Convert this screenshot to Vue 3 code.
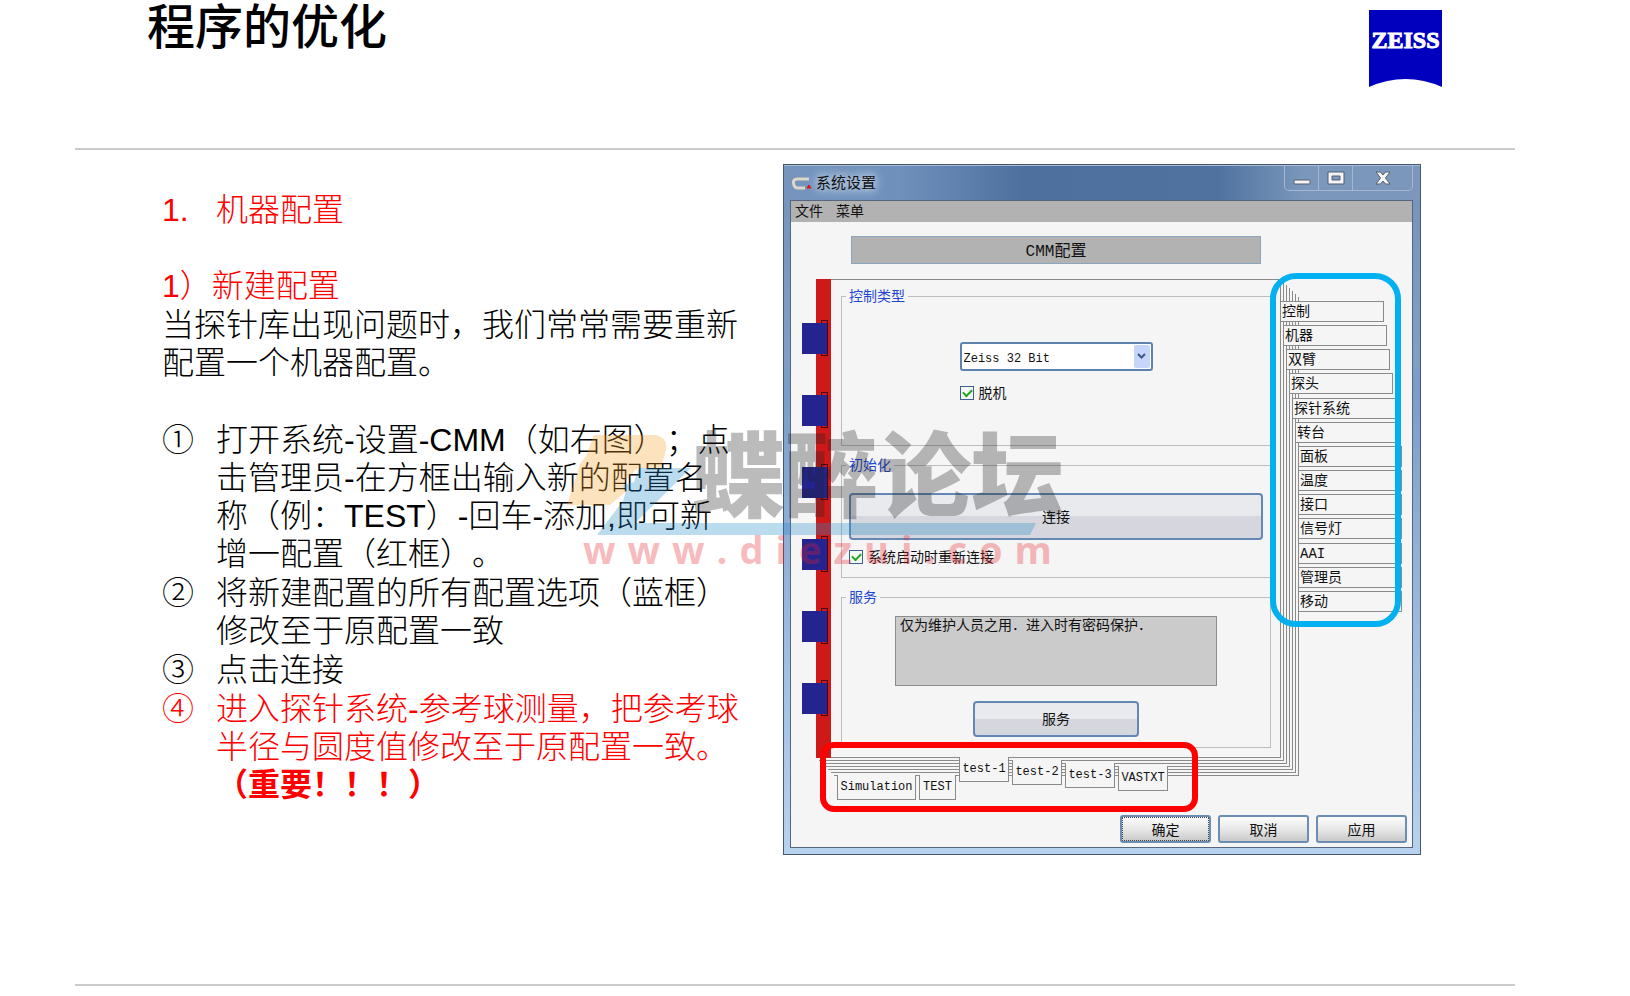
<template>
  <div class="slide">
    <header class="slide-header">
      <h1>程序的优化</h1>
      <svg class="logo" viewBox="0 0 73 78" role="img" aria-label="ZEISS">
        <path d="M0 0H73V77Q36.500 61 0 77Z" fill="#0000be" />
        <text x="36.500" y="38" text-anchor="middle" class="logo-text">ZEISS</text>
      </svg>
    </header>

    <main class="slide-body">
      <section class="article">
        <h2><span class="number">1.</span>机器配置</h2>
        <h3>1）新建配置</h3>
        <p>当探针库出现问题时，我们常常需要重新<br />配置一个机器配置。</p>
        <ul class="steps">
          <li v-for="step in steps" :key="step.mark" :class="{ red: step.red }">
            <span class="mark">{{ step.mark }}</span>
            <div>
              <div v-for="line in step.lines" :key="line">{{ line }}</div>
              <strong v-if="step.strong">{{ step.strong }}</strong>
            </div>
          </li>
        </ul>
      </section>

      <section class="window">
        <div class="title-bar">
          <svg class="app-icon" width="22" height="16" viewBox="0 0 22 16">
            <path
              d="M18 3H6Q2 3 2.500 7Q3 12 7 12H14"
              fill="none"
              stroke="#8a8a88"
              stroke-width="4"
            />
            <path
              d="M18 3H6Q2 3 2.500 7Q3 12 7 12H14"
              fill="none"
              stroke="#d8d8d4"
              stroke-width="3"
            />
            <path d="M18 9L20 12H16Z" fill="#e01010" stroke="#e01010" />
          </svg>
          <span class="window-title">系统设置</span>
          <div class="window-buttons">
            <button type="button" aria-label="最小化">
              <svg width="18" height="14" viewBox="0 0 18 14">
                <rect x="1" y="9" width="16" height="4" rx="1" fill="#f4f4f4" stroke="#555f70" />
              </svg>
            </button>
            <button type="button" aria-label="最大化">
              <svg width="18" height="14" viewBox="0 0 18 14">
                <path
                  d="M1 1H17V13H1ZM5 5V9H13V5Z"
                  fill="#f4f4f4"
                  fill-rule="evenodd"
                  stroke="#555f70"
                />
              </svg>
            </button>
            <button type="button" class="close" aria-label="关闭">
              <svg width="16" height="14" viewBox="0 0 16 14">
                <path
                  d="M1 1H5.500L8 4L10.500 1H15L10.500 7L15 13H10.500L8 10L5.500 13H1L5.500 7Z"
                  fill="#f4f4f4"
                  stroke="#555f70"
                />
              </svg>
            </button>
          </div>
        </div>

        <div class="window-content">
          <nav class="menu-bar">
            <a href="#">文件</a>
            <a href="#">菜单</a>
          </nav>

          <div class="config-title">CMM配置</div>

          <div class="binder">
            <div class="spine">
              <svg v-for="n in 6" :key="n" width="27" height="36" viewBox="0 0 27 36">
                <rect x="0" y="3" width="25" height="31" fill="#242490" />
                <rect x="19.500" y="0.500" width="6" height="35" fill="none" stroke="#4a0610" />
                <rect x="18" y="3" width="7" height="31" fill="#242490" />
              </svg>
            </div>

            <div class="sheet">
              <fieldset>
                <legend>控制类型</legend>
                <div class="control-type">
                  <div class="select-box">
                    <select v-model="control" aria-label="控制类型">
                      <option>Zeiss 32 Bit</option>
                    </select>
                    <span class="arrow">
                      <svg width="9" height="7" viewBox="0 0 9 7">
                        <path
                          d="M1 1L4.500 4.500L8 1"
                          fill="none"
                          stroke="#3c5a84"
                          stroke-width="2"
                        />
                      </svg>
                    </span>
                  </div>
                  <label class="check">
                    <input v-model="offline" type="checkbox" /><span>脱机</span>
                  </label>
                </div>
              </fieldset>

              <fieldset class="init">
                <legend>初始化</legend>
                <button type="button" class="push connect">连接</button>
                <label class="check">
                  <input v-model="reconnect" type="checkbox" /><span>系统启动时重新连接</span>
                </label>
              </fieldset>

              <fieldset class="service">
                <legend>服务</legend>
                <textarea v-model="note" aria-label="服务说明" readonly></textarea>
                <button type="button" class="push">服务</button>
              </fieldset>
            </div>

            <div class="side">
              <button
                v-for="(tab, i) in sideTabs"
                :key="tab"
                type="button"
                :class="'level-' + Math.min(i, 6)"
              >
                {{ tab }}
              </button>
              <div class="frame blue"></div>
            </div>
          </div>

          <div class="bottom">
            <button
              v-for="tab in bottomTabs"
              :key="tab.name"
              type="button"
              :class="tab.size"
            >
              {{ tab.name }}
            </button>
            <div class="frame red-frame"></div>
          </div>

          <div class="actions">
            <button type="button" class="focused">确定</button>
            <button type="button">取消</button>
            <button type="button">应用</button>
          </div>
        </div>
      </section>
    </main>

    <div class="slide-footer"></div>

    <div class="watermark">
      <svg width="480" height="112" viewBox="0 0 480 112">
        <path
          d="M34 10H95Q108 12 106 25L101 43H78L63 57L69 64L50 80H7L20 39L26 31Z"
          fill="#fba428"
        />
        <path
          d="M79 43H131L75 98H476L470 110H37L63 76L66 66L62 61L74 57Z"
          fill="#2389c9"
        />
      </svg>
      <div class="watermark-name">蝶醉论坛</div>
      <div class="watermark-url">www.diezui.com</div>
    </div>
  </div>
</template>

<script setup>
import { ref } from "vue";

const control = ref("Zeiss 32 Bit");
const offline = ref(true);
const reconnect = ref(true);
const note = ref("仅为维护人员之用．进入时有密码保护．");

const steps = [
  {
    mark: "①",
    lines: [
      "打开系统-设置-CMM（如右图）；点",
      "击管理员-在方框出输入新的配置名",
      "称（例：TEST）-回车-添加,即可新",
      "增一配置（红框）。",
    ],
  },
  {
    mark: "②",
    lines: ["将新建配置的所有配置选项（蓝框）", "修改至于原配置一致"],
  },
  { mark: "③", lines: ["点击连接"] },
  {
    mark: "④",
    lines: ["进入探针系统-参考球测量，把参考球", "半径与圆度值修改至于原配置一致。"],
    strong: "（重要！！！）",
    red: true,
  },
];

const sideTabs = [
  "控制",
  "机器",
  "双臂",
  "探头",
  "探针系统",
  "转台",
  "面板",
  "温度",
  "接口",
  "信号灯",
  "AAI",
  "管理员",
  "移动",
];

const bottomTabs = [
  { name: "Simulation", size: "wide" },
  { name: "TEST", size: "small" },
  { name: "test-1", size: "step-0" },
  { name: "test-2", size: "step-1" },
  { name: "test-3", size: "step-2" },
  { name: "VASTXT", size: "step-3" },
];
</script>

<style>
body {
  margin: 0;
  background: #fff;
}
</style>

<style scoped>
.slide {
  position: relative;
  box-sizing: border-box;
  min-height: 100vh;
  padding: 0 115px 10px 75px;
  display: flex;
  flex-direction: column;
  background: #fff;
  color: #000;
  font-family: "Liberation Sans", "Noto Sans CJK SC", sans-serif;
  text-spacing-trim: space-all;
}

button,
select,
textarea,
input {
  box-sizing: border-box;
  margin: 0;
  padding: 0;
  color: inherit;
  font: inherit;
}

.slide-header {
  box-sizing: border-box;
  height: 150px;
  padding: 0 73px 0 72px;
  display: flex;
  justify-content: space-between;
  border-bottom: 2px solid #cbcbcb;
}

h1 {
  margin: 0;
  font-size: 48px;
  line-height: 56px;
  font-weight: 500;
}

.logo {
  width: 73px;
  height: 78px;
  margin-top: 10px;
}

.logo-text {
  fill: #fff;
  stroke: #fff;
  stroke-width: 1px;
  font-family: "Liberation Serif", serif;
  font-size: 24px;
  font-weight: 700;
}

.slide-body {
  flex: 1;
  display: grid;
  grid-template-columns: minmax(0, 621fr) minmax(0, 638fr);
  align-items: start;
  padding: 14px 94px 0 87px;
}

/* left text */
.article {
  padding-top: 27px;
  font-size: 32px;
  line-height: 38px;
  font-weight: 300;
  white-space: nowrap;
}

h2,
h3,
.article p {
  margin: 0;
  font-size: 32px;
  font-weight: 300;
}

h2,
h3 {
  color: #f00;
}

h2 {
  display: flex;
  margin-bottom: 38px;
}

h3 {
  margin-bottom: 1px;
}

.number {
  width: 54px;
}

.article p {
  margin-bottom: 39px;
}

.steps {
  display: flex;
  flex-direction: column;
  gap: 1px;
  margin: 0;
  padding: 0;
  list-style: none;
}

.steps li {
  display: flex;
}

.steps .red {
  color: #f00;
}

.mark {
  width: 54px;
}

strong {
  font-weight: 700;
}

/* dialog window */
.window {
  box-sizing: border-box;
  padding: 0 7px 6px 6px;
  border: 1px solid #45566e;
  background: linear-gradient(#7593b9 0, #7f9fc8 28%, #7a9cc8 32%, #a3c1e3 75%, #b7d2ee 100%);
  color: #111;
  font-family: "Liberation Mono", "Noto Sans CJK SC", monospace;
  font-size: 14px;
  line-height: 16px;
}

.title-bar {
  height: 35px;
  margin: 0 -7px 0 -6px;
  padding-left: 7px;
  display: flex;
  align-items: flex-start;
  border-top: 1px solid #a9bdd6;
  box-sizing: border-box;
  background: linear-gradient(90deg, #7595bf, #6f90bb 18%, #4e709e 38%, #50729f 68%, #7b98bc 82%, #7b98bc);
}

.app-icon {
  margin-top: 10px;
}

.window-title {
  margin: 11px 0 0 3px;
  font-size: 15px;
  text-shadow: 0 0 8px #dbe6f4, 0 0 12px #dbe6f4;
}

.window-buttons {
  display: flex;
  margin: 0 7px 0 auto;
  border: 1px solid #a3b7d0;
  border-top: none;
  border-radius: 0 0 5px 5px;
}

.window-buttons button {
  width: 34px;
  height: 24px;
  display: flex;
  align-items: center;
  justify-content: center;
  border: none;
  border-right: 1px solid #a3b7d0;
  background: none;
}

.window-buttons .close {
  width: 59px;
  border-right: none;
}

.window-content {
  border: 1px solid #56677d;
  background: #f5f5f5;
}

.menu-bar {
  height: 21px;
  padding-left: 4px;
  display: flex;
  align-items: center;
  gap: 13px;
  background: #b2b2b2;
}

.menu-bar a {
  color: inherit;
  text-decoration: none;
}

.config-title {
  margin: 14px 151px 0 60px;
  padding-top: 4px;
  border: 1px solid #8aa5bf;
  background: #b2b2b2;
  font-size: 16px;
  line-height: 22px;
  text-align: center;
}

/* ring binder with stacked pages */
.binder {
  display: flex;
  margin: 15px 0 0 25px;
}

.spine {
  position: relative;
  z-index: 1;
  width: 15px;
  padding-top: 41px;
  display: flex;
  flex-direction: column;
  gap: 36px;
  box-sizing: border-box;
  background: #cf1919;
}

.spine svg {
  margin-left: -14px;
  overflow: visible;
}

.sheet {
  flex: 1;
  min-width: 0;
  margin-left: -15px;
  padding: 7px 9px 9px 25px;
  display: flex;
  flex-direction: column;
  gap: 10px;
  border: 1px solid #8a8a8a;
  border-left: none;
  background: #f5f5f5;
  box-shadow:
    2px 2px 0 #f5f5f5,
    3px 3px 0 #8a8a8a,
    5px 5px 0 #f5f5f5,
    6px 6px 0 #8a8a8a,
    8px 8px 0 #f5f5f5,
    9px 9px 0 #8a8a8a,
    11px 11px 0 #f5f5f5,
    12px 12px 0 #8a8a8a,
    14px 14px 0 #f5f5f5,
    15px 15px 0 #8a8a8a,
    17px 17px 0 #f5f5f5,
    18px 18px 0 #8a8a8a;
}

fieldset {
  box-sizing: border-box;
  min-width: 0;
  height: 159px;
  margin: 0;
  padding: 0 7px;
  border: 1px solid #bdbdbd;
}

fieldset.init {
  height: 122px;
}

fieldset.service {
  height: 160px;
}

legend {
  margin-left: -3px;
  padding: 2px 3px 0;
  color: #1f48d0;
}

.control-type {
  width: 193px;
  margin: 37px auto 0;
}

.select-box {
  position: relative;
  height: 29px;
  margin-bottom: 13px;
}

select {
  width: 100%;
  height: 100%;
  padding: 4px 0 0 2px;
  appearance: none;
  border: 2px solid #5d83ad;
  border-radius: 3px;
  background: #fff;
  font-size: 12px;
}

.arrow {
  position: absolute;
  top: 3px;
  right: 3px;
  width: 16px;
  height: 23px;
  display: flex;
  align-items: center;
  justify-content: center;
  border-radius: 2px;
  background: #c6d6fb;
  pointer-events: none;
}

.check {
  display: flex;
  align-items: center;
  gap: 5px;
}

.check span {
  padding-top: 2px;
}

.check input {
  width: 14px;
  height: 14px;
  appearance: none;
  border: 1px solid #3c6090;
  background: #f2f7f2;
}

.check input:checked::before {
  content: "";
  display: block;
  width: 7px;
  height: 4px;
  margin: 2px 0 0 2px;
  border: solid #1fa51f;
  border-width: 0 0 2px 2px;
  transform: rotate(-45deg);
}

.push {
  display: block;
  width: 166px;
  height: 36px;
  margin: 0 auto;
  padding-top: 2px;
  border: 2px solid #6488b4;
  border-radius: 4px;
  background: linear-gradient(#e9eaee 50%, #d6d7de 50%);
}

.push.connect {
  width: 100%;
  height: 47px;
  margin: 19px 0 8px;
}

textarea {
  display: block;
  width: 322px;
  height: 70px;
  margin: 10px auto 15px;
  padding: 1px 4px 0;
  resize: none;
  border: 1px solid #8c8c8c;
  background: #cbcbcb;
  font-size: 14px;
}

/* side tabs */
.side {
  position: relative;
  z-index: 1;
  width: 131px;
  height: 311px;
  margin-top: 22px;
  display: flex;
  flex-direction: column;
  justify-content: space-between;
}

.side button {
  width: 103px;
  height: 21px;
  padding: 1px 0 0 1px;
  border: 1px solid #8a8a8a;
  border-left: none;
  background: #f5f5f5;
  text-align: left;
  line-height: 18px;
}

.level-1 {
  margin-left: 3px;
}

.level-2 {
  margin-left: 6px;
}

.level-3 {
  margin-left: 9px;
}

.level-4 {
  margin-left: 12px;
}

.level-5 {
  margin-left: 15px;
}

.level-6 {
  margin-left: 18px;
}

.frame {
  position: absolute;
  box-sizing: border-box;
  pointer-events: none;
}

.frame.blue {
  top: -28px;
  left: -11px;
  width: 131px;
  height: 354px;
  border: 6px solid #00b0f0;
  border-radius: 26px;
}

/* configuration tabs */
.bottom {
  position: relative;
  z-index: 1;
  display: flex;
  align-items: flex-start;
  gap: 3px;
  height: 58px;
  margin: -1px 0 0 46px;
}

.bottom button {
  flex: none;
  width: 50px;
  height: 25px;
  border: 1px solid #8a8a8a;
  border-top: none;
  background: #f5f5f5;
  font-size: 12px;
  line-height: 16px;
  white-space: nowrap;
}

.bottom .wide {
  width: 79px;
  margin-top: 18px;
}

.bottom .small {
  width: 37px;
  margin-top: 18px;
}

.bottom .step-1 {
  margin-top: 3px;
}

.bottom .step-2 {
  margin-top: 6px;
}

.bottom .step-3 {
  margin-top: 9px;
}

.red-frame {
  top: -15px;
  left: -17px;
  width: 378px;
  height: 70px;
  border: 6px solid #f00;
  border-radius: 14px;
}

.actions {
  display: flex;
  justify-content: flex-end;
  gap: 7px;
  padding: 0 5px 4px;
}

.actions button {
  width: 91px;
  height: 28px;
  padding-top: 3px;
  border: 2px solid #6a8db3;
  border-radius: 3px;
  background: linear-gradient(#fdfdfd, #e8e8e8 50%, #c9c9c9);
}

.actions .focused {
  outline: 1px dotted #444;
  outline-offset: -3px;
}

.slide-footer {
  height: 2px;
  background: #cbcbcb;
}

/* watermark over the slide */
.watermark {
  position: absolute;
  z-index: 2;
  top: 425px;
  left: 560px;
  display: grid;
  pointer-events: none;
  opacity: 0.3;
}

.watermark svg,
.watermark-name {
  grid-area: 1 / 1;
}

.watermark-name {
  padding-left: 132px;
  color: #202020;
  font-size: 93px;
  line-height: 106px;
  font-weight: 900;
}

.watermark-url {
  padding-left: 23px;
  color: #e8202c;
  font-family: "Open Sans", sans-serif;
  font-size: 38px;
  line-height: 24px;
  font-weight: 700;
  letter-spacing: 12px;
}
</style>
